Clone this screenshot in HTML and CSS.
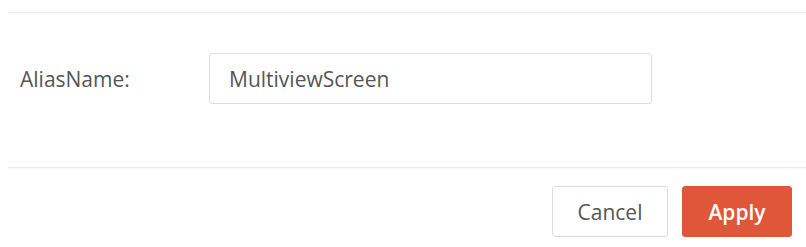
FILE: index.html
```html
<!DOCTYPE html>
<html lang="en">
<head>
    <meta charset="UTF-8">
    <meta name="viewport" content="width=device-width, initial-scale=1.0">
    <title>Alias Name</title>
    <link rel="stylesheet" href="styles.css">
</head>
<body>
    <div class="dialog">
        <div class="divider"></div>

        <div class="dialog-body">
            <div class="form-row">
                <label class="form-label" for="alias">AliasName:</label>
                <input class="form-input" id="alias" type="text" value="MultiviewScreen">
            </div>
        </div>

        <div class="divider"></div>

        <div class="dialog-footer">
            <button class="btn btn-cancel">Cancel</button>
            <button class="btn btn-apply">Apply</button>
        </div>
    </div>
</body>
</html>
```

FILE: styles.css
```css
body {
    margin: 0;
    font-family: "Open Sans", Arial, sans-serif;
    background-color: #fff;
    color: #555;
}

.dialog {
    padding: 12px 0 0 8px;
}

.divider {
    height: 1px;
    background-color: #ececec;
    box-shadow: 0 1px 1px rgba(0, 0, 0, 0.03);
}

.dialog-body {
    padding: 40px 0 63px 12px;
}

.form-row {
    display: flex;
    align-items: center;
}

.form-label {
    width: 189px;
    font-size: 21px;
    color: #555;
}

.form-input {
    box-sizing: border-box;
    width: 443px;
    height: 51px;
    padding: 0 19px;
    border: 1px solid #dedede;
    border-radius: 3px;
    font-family: inherit;
    font-size: 21px;
    color: #555;
    outline: none;
}

.dialog-footer {
    display: flex;
    justify-content: flex-end;
    gap: 14px;
    padding: 18px 14px 0 0;
}

.btn {
    box-sizing: border-box;
    height: 51px;
    border-radius: 3px;
    font-family: inherit;
    font-size: 21px;
    cursor: pointer;
}

.btn-cancel {
    width: 116px;
    background-color: #fff;
    border: 1px solid #dcdcdc;
    color: #555;
}

.btn-apply {
    width: 110px;
    background-color: #e05638;
    border: 1px solid #e05638;
    color: #fff;
    font-weight: 600;
}
```
